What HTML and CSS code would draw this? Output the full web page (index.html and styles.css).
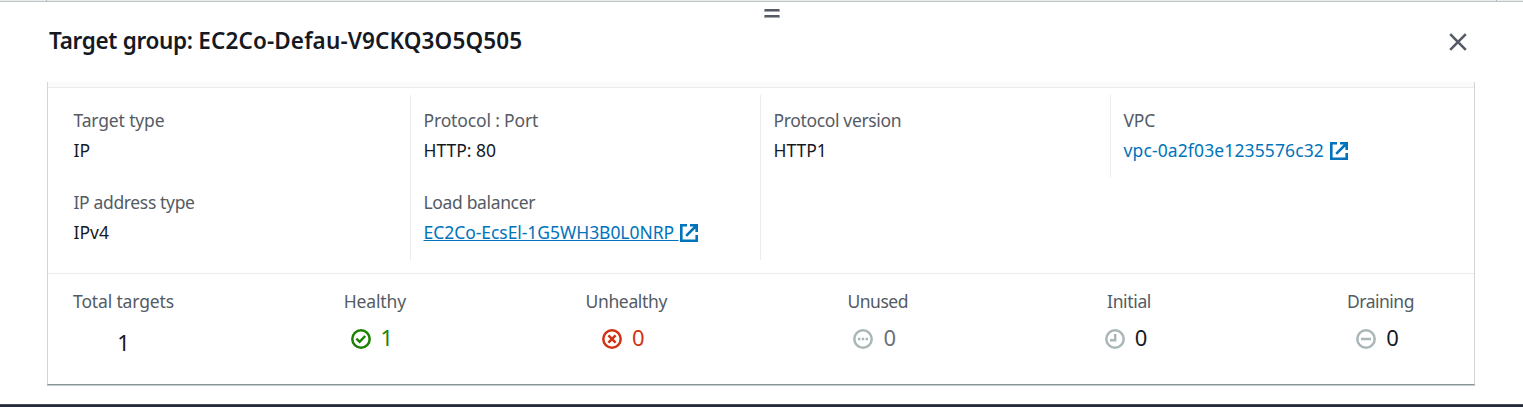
FILE: index.html
```
<!DOCTYPE html>
<html lang="en">
<head>
<meta charset="utf-8">
<title>Target group</title>
<link rel="stylesheet" href="styles.css">
</head>
<body>
<div class="page-edge"><i></i></div>
<main class="panel">
  <div class="handle"><i></i><i></i></div>
  <header class="panel-header">
    <h1 class="title">Target group: <span class="group-name">EC2Co-Defau-V9CKQ3O5Q505</span></h1>
    <button class="close" aria-label="Close"><svg width="18" height="18" viewBox="0 0 18 18"><path d="M1.2 1.2 16.8 16.8M16.8 1.2 1.2 16.8"/></svg></button>
  </header>
  <section class="card">
    <div class="card-top"></div>
    <div class="details">
      <dl class="cell"><dt class="snug">Target type</dt><dd>IP</dd></dl>
      <dl class="cell ruled"><dt class="snug">Protocol : Port</dt><dd>HTTP: 80</dd></dl>
      <dl class="cell ruled"><dt>Protocol version</dt><dd>HTTP1</dd></dl>
      <dl class="cell ruled"><dt class="snug">VPC</dt><dd class="link"><span class="vpc">vpc-0a2f03e1235576c32</span><svg class="ext" width="18" height="18" viewBox="0 0 18 18"><path d="M7 1.3H1.3v15.4h15.4V11M10 1.3h6.7V8M16.5 1.5 6.2 11.8"/></svg></dd></dl>
      <dl class="cell"><dt>IP address type</dt><dd>IPv4</dd></dl>
      <dl class="cell ruled"><dt>Load balancer</dt><dd class="link"><span class="lb">EC2Co-EcsEl-1G5WH3B0L0NRP&nbsp;</span><svg class="ext" width="18" height="18" viewBox="0 0 18 18"><path d="M7 1.3H1.3v15.4h15.4V11M10 1.3h6.7V8M16.5 1.5 6.2 11.8"/></svg></dd></dl>
      <div class="cell ruled"></div>
    </div>
    <div class="stats">
      <div class="stat"><div class="label snug">Total targets</div><div class="total">1</div></div>
      <div class="stat green"><div class="label snug">Healthy</div><div class="count"><svg width="20" height="20" viewBox="0 0 20 20"><circle cx="10" cy="10" r="8.7"/><path d="m5.4 9.6 3.2 3.2 5.6-5.8"/></svg><span>1</span></div></div>
      <div class="stat red"><div class="label">Unhealthy</div><div class="count"><svg width="20" height="20" viewBox="0 0 20 20"><circle cx="10" cy="10" r="8.7"/><path d="m6.4 6.4 7.2 7.2M13.6 6.4l-7.2 7.2"/></svg><span>0</span></div></div>
      <div class="stat grey"><div class="label tight">Unused</div><div class="count"><svg width="20" height="20" viewBox="0 0 20 20"><circle cx="10" cy="10" r="8.7"/><path d="M5 10h2.4M8.8 10h2.4M12.6 10H15"/></svg><span>0</span></div></div>
      <div class="stat"><div class="label">Initial</div><div class="count"><svg width="20" height="20" viewBox="0 0 20 20"><circle cx="10" cy="10" r="8.7"/><path d="M10.2 5v6.2H5"/></svg><span>0</span></div></div>
      <div class="stat"><div class="label tight">Draining</div><div class="count"><svg width="20" height="20" viewBox="0 0 20 20"><circle cx="10" cy="10" r="8.7"/><path d="M5 10h10"/></svg><span>0</span></div></div>
    </div>
  </section>
</main>
<footer class="bottom-bar"></footer>
</body>
</html>
```
FILE: styles.css
```
* { box-sizing: border-box; }
body {
  margin: 0;
  height: 407px;
  overflow: hidden;
  display: flex;
  flex-direction: column;
  background: #fff;
  color: #16191f;
  font: 17.5px/30px "Noto Sans", "Open Sans", sans-serif;
}
.page-edge { height: 2px; flex: none; padding: 0 26px 0 46px; background: #eaeded; border-bottom: 1px solid #bfc5c6; }
.page-edge i { display: block; height: 1px; border: solid #aab7b8; border-width: 0 1px; }
.panel { flex: 1; padding: 0 48px 0 47px; }
.handle { height: 20px; padding: 7px 0 0 22px; display: flex; flex-direction: column; align-items: center; gap: 3px; }
.handle i { width: 16px; height: 3px; background: #545b64; border: solid #a2a7b0; border-width: 0 1px 1px; }
.panel-header { height: 60px; display: flex; justify-content: space-between; padding: 1px 8px 0 2px; }
.title { margin: 2px 0 0; font-size: 22.5px; line-height: 32px; font-weight: 600; letter-spacing: -.32px; }
.group-name { letter-spacing: .13px; }
.close { width: 18px; height: 18px; margin-top: 10px; padding: 0; border: 0; background: none; }
svg { display: block; fill: none; flex: none; }
.close svg { stroke: #545b64; stroke-width: 2.6; }
.card { height: 303px; border: solid #d0d5d5; border-width: 0 1px 1px; border-bottom-color: #879596; box-shadow: 0 1px 0 #c3cbcb; }
.card-top { height: 6px; background: #fafafa; border-bottom: 1px solid #eaeded; }
.details { height: 186px; padding: 7px 0 0 12px; display: grid; grid-template-columns: repeat(4, 350px); grid-template-rows: 82px 83px; border-bottom: 1px solid #eaeded; }
.cell { margin: 0; padding: 10px 0 0 12.5px; border-left: 1px solid transparent; }
.ruled { border-left-color: #eaeded; }
dd { margin: 0; }
dt, .label { color: #545b64; letter-spacing: -.35px; }
.snug { letter-spacing: -.15px; }
.tight { letter-spacing: -.5px; }
.link { display: flex; align-items: center; gap: 6px; color: #0073bb; }
.ext { margin-top: 2px; stroke: currentColor; stroke-width: 2.6; }
.vpc { letter-spacing: .12px; }
.lb { margin-right: -5px; text-decoration: underline; letter-spacing: -.05px; }
.stats { display: flex; justify-content: space-between; padding: 12px 43px 0 25px; }
.stat { width: 101px; display: flex; flex-direction: column; align-items: center; white-space: nowrap; }
.total { font-size: 22px; padding-top: 11px; }
.count { display: flex; align-items: center; gap: 10px; padding: 6px 6px 0 0; font-size: 22px; }
.count svg { margin-top: 3px; stroke: #aab7b8; stroke-width: 2.5; }
.green .count { color: #1d8102; }
.red .count { color: #d13212; }
.grey .count { color: #687078; }
.green .count svg, .red .count svg { stroke: currentColor; }
.bottom-bar { height: 3px; flex: none; background: #262c3c; border-top: 1px solid #454c59; }
```
